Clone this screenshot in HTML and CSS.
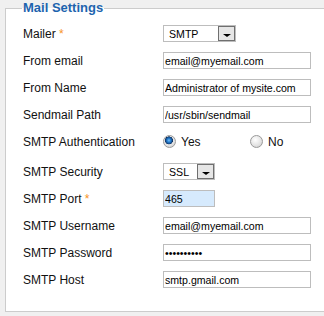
FILE: index.html
```html
<!DOCTYPE html>
<html lang="en">

<head>
    <meta charset="UTF-8">
    <title>Mail Settings</title>
    <link rel="stylesheet" href="styles.css">
</head>

<body>
    <fieldset class="mail-settings">
        <legend>Mail Settings</legend>

        <div class="row">
            <label>Mailer <span class="req">*</span></label>
            <div class="select mailer"><span>SMTP</span><span class="arrow"></span></div>
        </div>
        <div class="row">
            <label for="from-email">From email</label>
            <input class="text" type="text" id="from-email" value="email@myemail.com">
        </div>
        <div class="row">
            <label for="from-name">From Name</label>
            <input class="text" type="text" id="from-name" value="Administrator of mysite.com">
        </div>
        <div class="row">
            <label for="sendmail">Sendmail Path</label>
            <input class="text" type="text" id="sendmail" value="/usr/sbin/sendmail">
        </div>
        <div class="row">
            <label>SMTP Authentication</label>
            <div class="radios">
                <span class="option"><input type="radio" name="auth" id="auth-yes" checked><label for="auth-yes">Yes</label></span>
                <span class="option"><input type="radio" name="auth" id="auth-no"><label for="auth-no">No</label></span>
            </div>
        </div>
        <div class="row spaced">
            <label>SMTP Security</label>
            <div class="select security"><span>SSL</span><span class="arrow"></span></div>
        </div>
        <div class="row">
            <label for="port">SMTP Port <span class="req">*</span></label>
            <input class="text port" type="text" id="port" value="465">
        </div>
        <div class="row">
            <label for="username">SMTP Username</label>
            <input class="text" type="text" id="username" value="email@myemail.com">
        </div>
        <div class="row">
            <label for="password">SMTP Password</label>
            <input class="text" type="password" id="password" value="1234567890">
        </div>
        <div class="row">
            <label for="host">SMTP Host</label>
            <input class="text" type="text" id="host" value="smtp.gmail.com">
        </div>
    </fieldset>
</body>

</html>
```

FILE: styles.css
```css
body {
    margin: 0;
    background-color: #f0f0f0;
    font-family: "Liberation Sans", Arial, sans-serif;
    font-size: 12px;
    color: #111;
}

/* the box runs on past the right edge, so no right border */
.mail-settings {
    margin: 0 0 0 5px;
    padding: 4px 0 18px 17px;
    border: 1px solid #cccccc;
    border-right: none;
    background-color: #ffffff;
    min-inline-size: 0;
}

.mail-settings legend {
    font-size: 13px;
    font-weight: bold;
    line-height: 16px;
    color: #1d64ae;
    padding: 0 1px;
    margin-left: -1px;
}

.row {
    display: grid;
    grid-template-columns: 140px auto;
    align-items: center;
    justify-items: start;
    height: 27px;
}

.row.spaced {
    margin-top: 3px;
}

.req {
    color: #f7931e;
}

.text {
    box-sizing: border-box;
    width: 148px;
    height: 17px;
    margin: 0;
    padding: 0 0 0 1px;
    border: 1px solid #bdbdbd;
    font-family: "Liberation Sans", Arial, sans-serif;
    font-size: 10.6px;
    color: #000;
    outline: none;
}

.text.port {
    width: 52px;
    background-color: #d6eafd;
}

.select {
    box-sizing: border-box;
    display: flex;
    align-items: center;
    justify-content: space-between;
    height: 17px;
    padding-left: 5px;
    border: 1px solid #bdbdbd;
    background-color: #fff;
    font-size: 10.6px;
    color: #000;
}

.select.mailer {
    width: 73px;
}

.select.security {
    width: 52px;
}

.select .arrow {
    box-sizing: border-box;
    width: 17px;
    height: 15px;
    border: 1px solid #6f6f6f;
    background-color: #e6e6e6;
    display: flex;
    justify-content: center;
    align-items: flex-end;
    padding-bottom: 3px;
}

.select .arrow::after {
    content: "";
    border-left: 4px solid transparent;
    border-right: 4px solid transparent;
    border-top: 3px solid #000;
}

.radios {
    display: flex;
    align-items: center;
}

.option {
    display: flex;
    align-items: center;
    width: 87px;
}

.option input {
    appearance: none;
    width: 13px;
    height: 13px;
    margin: 0 5px 0 0;
    border-radius: 50%;
    border: 1px solid #9a9a9a;
    background: radial-gradient(circle at 40% 35%, #ffffff 0, #e2e2e2 60%, #c4c4c4 100%);
}

.option input:checked {
    background:
        radial-gradient(circle at 45% 40%, #7fc0f5 0, #2a86d8 1.6px, #154f8f 3.2px, #0d2f5c 3.8px, transparent 4.2px),
        radial-gradient(circle at 40% 35%, #ffffff 0, #e2e2e2 60%, #c4c4c4 100%);
}

.option label {
    font-size: 12px;
}
```
